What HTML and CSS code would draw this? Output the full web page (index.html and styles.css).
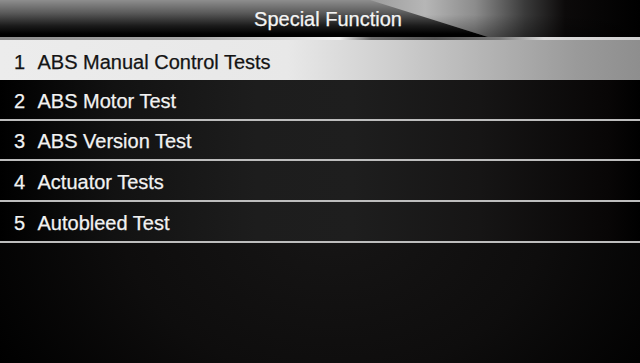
FILE: index.html
```html
<!DOCTYPE html>
<html>
<head>
<meta charset="utf-8">
<link rel="stylesheet" href="styles.css">
</head>
<body>
<div class="screen">
  <header class="titlebar"><span class="title">Special Function</span></header>
  <div class="rule"></div>
  <ul class="menu">
    <li class="item selected"><span class="num">1</span>ABS Manual Control Tests</li>
    <li class="item"><span class="num">2</span>ABS Motor Test</li>
    <li class="item"><span class="num">3</span>ABS Version Test</li>
    <li class="item"><span class="num">4</span>Actuator Tests</li>
    <li class="item"><span class="num">5</span>Autobleed Test</li>
  </ul>
</div>
</body>
</html>
```

FILE: styles.css
```css
html, body {
  margin: 0;
  padding: 0;
  background: #000;
}
.screen {
  width: 640px;
  height: 363px;
  overflow: hidden;
  font-family: "Liberation Sans", Arial, sans-serif;
  font-size: 20px;
  -webkit-text-stroke: 0.25px currentColor;
  display: flex;
  flex-direction: column;
  background:
    radial-gradient(ellipse 60% 80% at 52% 60%, #171616 0%, #0e0d0d 55%, rgba(0,0,0,0) 100%),
    #000;
}
.titlebar {
  position: relative;
  height: 37px;
  box-sizing: border-box;
  padding: 2px 0 0 16px;
  line-height: 35px;
  text-align: center;
  color: #f4f4f4;
  background: linear-gradient(to bottom, #8e8e8e 0%, #5a5a5a 35%, #1a1a1a 70%, #000 92%);
  overflow: hidden;
}
.titlebar::before {
  content: "";
  position: absolute;
  left: 0;
  top: 0;
  right: 0;
  bottom: 0;
  clip-path: polygon(370px 0, 640px 0, 640px 37px, 488px 37px);
  background:
    linear-gradient(to bottom, rgba(0,0,0,0) 40%, rgba(0,0,0,0.35) 100%),
    linear-gradient(to right, #9c9c9c 370px, #b6b6b6 425px, #8c8c8c 475px, #3a3a3a 525px, #0c0a0a 565px, #000 640px);
}
.title {
  position: relative;
}
.rule {
  height: 3px;
  background: linear-gradient(to right, #8c8c8c 0%, #a8a8a8 30%, #e8e8e8 50%, #f2f2f2 53%, #6e6e6e 58%, #555 68%, #7a7a7a 78%, #dcdcdc 85%, #d0d0d0 100%);
}
.menu {
  list-style: none;
  margin: 0;
  padding: 0;
  background: linear-gradient(to right, #000 0%, #121212 18%, #1d1d1d 40%, #1e1e1e 55%, #161515 75%, #080606 95%, #000 100%);
}
.item {
  height: 40.7px;
  box-sizing: border-box;
  padding: 3.5px 0 0 14px;
  line-height: 35px;
  color: #f2f2f2;
  border-bottom: 2px solid #bdbdbd;
  white-space: nowrap;
}
.item.selected {
  height: 40px;
  line-height: 36px;
  border-bottom: none;
  color: #141414;
  background: linear-gradient(to right, #ececec 0%, #e8e8e8 45%, #cdcdcd 62%, #b0b0b0 78%, #9a9a9a 90%, #8e8e8e 100%);
}
.num {
  display: inline-block;
  width: 23.5px;
}
```
